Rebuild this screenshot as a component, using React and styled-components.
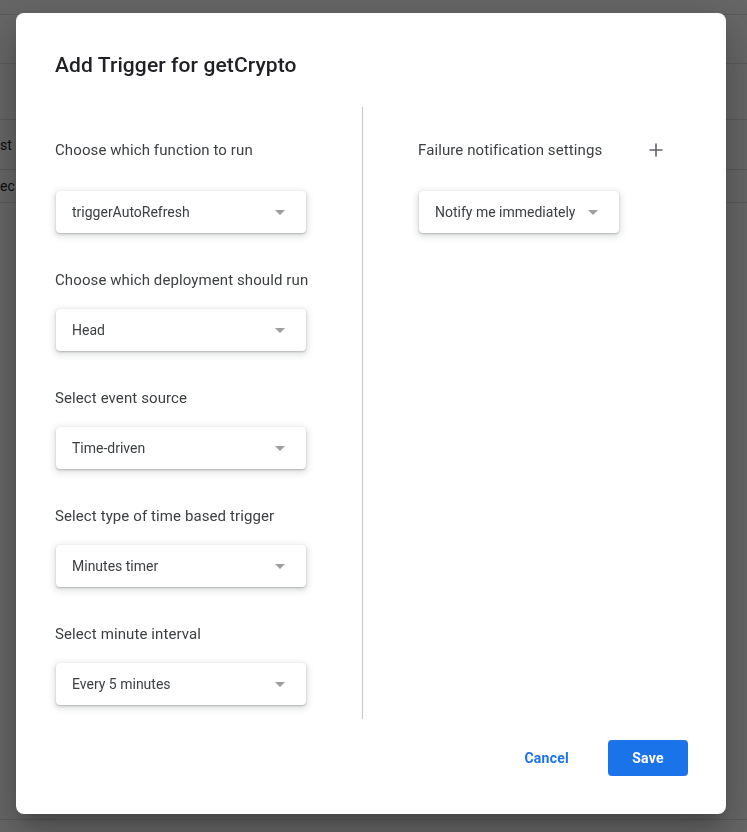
import React from 'react'
import styled, { createGlobalStyle } from 'styled-components'

const GlobalStyle = createGlobalStyle`
  html, body {
    margin: 0;
    padding: 0;
    background: #fff;
    font-family: Roboto, "Liberation Sans", Arial, sans-serif;
  }
  * { box-sizing: border-box; }
`

const Page = styled.div`
  width: 747px;
  height: 832px;
  overflow: hidden;
  background: #fff;
`

const SheetRow = styled.div`
  height: ${props => props.height}px;
  border-bottom: 1px solid #e0e0e0;
  display: flex;
  align-items: center;
  font-size: 14px;
  color: #202124;
  white-space: nowrap;
`

const Overlay = styled.div`
  position: fixed;
  inset: 0;
  background: rgba(0, 0, 0, 0.6);
  padding: 13px 0 0 16px;
`

const Dialog = styled.div`
  width: 710px;
  height: 801px;
  background: #fff;
  border-radius: 8px;
  box-shadow: 0 11px 15px -7px rgba(0, 0, 0, 0.2), 0 24px 38px 3px rgba(0, 0, 0, 0.14),
    0 9px 46px 8px rgba(0, 0, 0, 0.12);
  padding: 40px 38px 38px 39px;
  display: flex;
  flex-direction: column;
`

const Title = styled.h2`
  margin: 0;
  font-size: 21px;
  line-height: 24px;
  font-weight: 500;
  color: #202124;
  letter-spacing: 0.1px;
`

const Body = styled.div`
  margin-top: 30px;
  height: 612px;
  display: flex;
`

const LeftColumn = styled.div`
  width: 308px;
  border-right: 1px solid #c8c8c8;
  padding-top: 33px;
  display: flex;
  flex-direction: column;
`

const RightColumn = styled.div`
  flex: 1;
  padding: 33px 0 0 55px;
  display: flex;
  flex-direction: column;
`

const Field = styled.div`
  display: flex;
  flex-direction: column;
  align-items: flex-start;
  margin-bottom: 37px;
`

const LabelRow = styled.div`
  display: flex;
  align-items: center;
  justify-content: space-between;
  height: 20px;
  width: ${props => (props.wide ? '250px' : 'auto')};
  margin-bottom: ${props => (props.first ? 31 : 19)}px;
`

const Label = styled.div`
  font-size: 15px;
  line-height: 20px;
  color: #3c4043;
  letter-spacing: 0.1px;
`

const PlusButton = styled.button`
  width: 24px;
  height: 20px;
  padding: 0;
  border: none;
  background: none;
  display: flex;
  align-items: center;
  justify-content: center;
  cursor: pointer;
`

const Select = styled.div`
  height: 42px;
  width: ${props => (props.auto ? 'auto' : '250px')};
  margin-left: 1px;
  border-radius: 4px;
  background: #fff;
  box-shadow: 0 1px 2px rgba(60, 64, 67, 0.3), 0 2px 6px 2px rgba(60, 64, 67, 0.15);
  display: flex;
  align-items: center;
  padding: 0 21px 0 16px;
  gap: 13px;
  font-size: 14px;
  color: #3c4043;
  cursor: pointer;
`

const SelectValue = styled.span`
  flex: 1;
  white-space: nowrap;
`

const Caret = styled.span`
  width: 0;
  height: 0;
  border-left: 5px solid transparent;
  border-right: 5px solid transparent;
  border-top: 5px solid #9e9e9e;
`

const Footer = styled.div`
  margin-top: 21px;
  display: flex;
  justify-content: flex-end;
  align-items: center;
  gap: 15px;
`

const Button = styled.button`
  height: 36px;
  padding: 0 24px;
  min-width: 80px;
  border: none;
  border-radius: 4px;
  font-family: Roboto, "Liberation Sans", Arial, sans-serif;
  font-size: 14px;
  font-weight: 700;
  letter-spacing: 0.25px;
  cursor: pointer;
  background: ${props => (props.primary ? '#1a73e8' : 'transparent')};
  color: ${props => (props.primary ? '#fff' : '#1a73e8')};
`

const leftFields = [
  { label: 'Choose which function to run', value: 'triggerAutoRefresh' },
  { label: 'Choose which deployment should run', value: 'Head' },
  { label: 'Select event source', value: 'Time-driven' },
  { label: 'Select type of time based trigger', value: 'Minutes timer' },
  { label: 'Select minute interval', value: 'Every 5 minutes' },
]

const Dropdown = ({ value, auto }) => (
  <Select auto={auto}>
    <SelectValue>{value}</SelectValue>
    <Caret />
  </Select>
)

export default function App() {
  return (
    <>
      <GlobalStyle />
      <Page>
        <SheetRow height={15} />
        <SheetRow height={49} />
        <SheetRow height={56} />
        <SheetRow height={50}>st run</SheetRow>
        <SheetRow height={33}>ec 5, 2021</SheetRow>
        <SheetRow height={617} />
      </Page>
      <Overlay>
        <Dialog>
          <Title>Add Trigger for getCrypto</Title>
          <Body>
            <LeftColumn>
              {leftFields.map((f, i) => (
                <Field key={f.label}>
                  <LabelRow first={i === 0}>
                    <Label>{f.label}</Label>
                  </LabelRow>
                  <Dropdown value={f.value} />
                </Field>
              ))}
            </LeftColumn>
            <RightColumn>
              <Field>
                <LabelRow first wide>
                  <Label>Failure notification settings</Label>
                  <PlusButton aria-label="Add">
                    <svg width="16" height="16" viewBox="0 0 16 16">
                      <path d="M8 1.5v13M1.5 8h13" stroke="#5f6368" strokeWidth="1.6" fill="none" />
                    </svg>
                  </PlusButton>
                </LabelRow>
                <Dropdown value="Notify me immediately" auto />
              </Field>
            </RightColumn>
          </Body>
          <Footer>
            <Button>Cancel</Button>
            <Button primary>Save</Button>
          </Footer>
        </Dialog>
      </Overlay>
    </>
  )
}
